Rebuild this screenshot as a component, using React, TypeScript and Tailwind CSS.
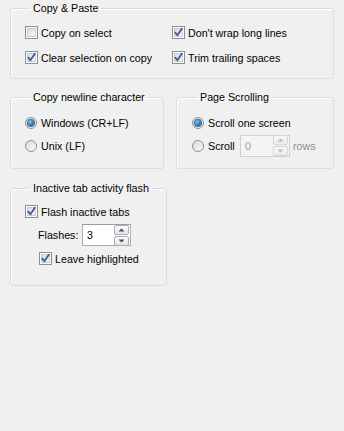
import React from "react";

const font = { fontFamily: '"Liberation Sans", Arial, sans-serif' };

function CheckBox({ checked }: { checked: boolean }) {
  return (
    <span className="relative inline-block w-[13px] h-[13px] shrink-0 border border-[#8e8f8f] bg-white">
      <span className="absolute left-[1px] top-[1px] w-[9px] h-[9px] border border-[#c7cbd1] bg-gradient-to-br from-[#d8dbe0] to-[#f9f9f9]" />
      {checked && (
        <svg className="absolute left-0 top-0" width="11" height="11" viewBox="0 0 11 11">
          <path d="M2.3 5.6 L4.4 8.3 L8.8 1.8" fill="none" stroke="#3b5a9a" strokeWidth="1.8" strokeLinecap="round" strokeLinejoin="round" />
        </svg>
      )}
    </span>
  );
}

function Radio({ checked }: { checked: boolean }) {
  return (
    <span className="relative inline-flex items-center justify-center w-[12px] h-[12px] shrink-0 rounded-full border border-[#8e8f8f] bg-gradient-to-br from-[#d6d9de] to-[#fbfbfb]">
      {checked && (
        <span className="w-[6px] h-[6px] rounded-full bg-[radial-gradient(circle_at_35%_35%,#8fd0f5_0%,#2a86c4_45%,#124d7e_100%)] shadow-[0_0_0_1px_#3d6a8f]" />
      )}
    </span>
  );
}

function SpinButtons({ disabled }: { disabled?: boolean }) {
  const arrow = disabled ? "#b9b9b9" : "#4d4d4d";
  const btn =
    "flex items-center justify-center w-[15px] h-[10px] rounded-[2px] border " +
    (disabled
      ? "border-[#d6d6d6] bg-gradient-to-b from-[#f7f7f7] to-[#ececec]"
      : "border-[#a9acb2] bg-gradient-to-b from-[#fbfbfb] to-[#e3e6ea]");
  return (
    <span className="flex flex-col gap-[1px]">
      <span className={btn}>
        <svg width="7" height="4" viewBox="0 0 7 4">
          <path d="M0.5 3.5 L3.5 0.5 L6.5 3.5 Z" fill={arrow} />
        </svg>
      </span>
      <span className={btn}>
        <svg width="7" height="4" viewBox="0 0 7 4">
          <path d="M0.5 0.5 L3.5 3.5 L6.5 0.5 Z" fill={arrow} />
        </svg>
      </span>
    </span>
  );
}

function Group({
  title,
  className,
  children,
}: {
  title: string;
  className: string;
  children: React.ReactNode;
}) {
  return (
    <fieldset
      className={
        "m-0 min-w-0 border border-[#d5dfe5] rounded-[3px] shadow-[inset_1px_1px_0_#ffffff] " +
        className
      }
    >
      <legend className="ml-[5px] px-[3px] leading-[14px] text-[10.7px] text-black whitespace-nowrap">{title}</legend>
      {children}
    </fieldset>
  );
}

export default function App() {
  return (
    <div
      className="w-[344px] h-[431px] bg-[#f0f0f0] px-[10px] pt-[1px] text-[10.7px] text-black leading-[14px] overflow-hidden"
      style={font}
    >
      <Group title="Copy & Paste" className="pt-[5px] pb-[8px] pl-[14px]">
        <div className="grid grid-cols-[147px_1fr]">
          <label className="flex items-center gap-[3px] h-[25px] whitespace-nowrap">
            <CheckBox checked={false} />
            <span>Copy on select</span>
          </label>
          <label className="flex items-center gap-[3px] h-[25px] whitespace-nowrap">
            <CheckBox checked />
            <span>Don't wrap long lines</span>
          </label>
          <label className="flex items-center gap-[3px] h-[25px] whitespace-nowrap">
            <CheckBox checked />
            <span>Clear selection on copy</span>
          </label>
          <label className="flex items-center gap-[3px] h-[25px] whitespace-nowrap">
            <CheckBox checked />
            <span>Trim trailing spaces</span>
          </label>
        </div>
      </Group>

      <div className="flex mt-[11px]">
        <Group title="Copy newline character" className="w-[154px] pt-[7px] pb-[11px] pl-[14px]">
          <label className="flex items-center gap-[4px] h-[23px] whitespace-nowrap">
            <Radio checked />
            <span>Windows (CR+LF)</span>
          </label>
          <label className="flex items-center gap-[4px] h-[23px] whitespace-nowrap">
            <Radio checked={false} />
            <span>Unix (LF)</span>
          </label>
        </Group>
        <Group title="Page Scrolling" className="ml-[12px] w-[158px] pt-[7px] pb-[11px] pl-[15px]">
          <label className="flex items-center gap-[4px] h-[23px] whitespace-nowrap">
            <Radio checked />
            <span>Scroll one screen</span>
          </label>
          <div className="flex items-center h-[23px] whitespace-nowrap">
            <Radio checked={false} />
            <span className="ml-[4px] w-[32px]">Scroll</span>
            <span className="flex items-center justify-between w-[50px] h-[22px] border border-[#d0d0d0] bg-[#f4f4f4] pl-[4px] pr-[1px]">
              <span className="text-[#a3a3a3]">0</span>
              <SpinButtons disabled />
            </span>
            <span className="ml-[3px] text-[#8f8f8f]">rows</span>
          </div>
        </Group>
      </div>

      <Group title="Inactive tab activity flash" className="mt-[12px] w-[157px] pt-[5px] pb-[15px] pl-[14px]">
        <label className="flex items-center gap-[3px] h-[23px] whitespace-nowrap">
          <CheckBox checked />
          <span>Flash inactive tabs</span>
        </label>
        <div className="flex items-center h-[24px] pl-[13px] whitespace-nowrap">
          <span className="w-[44px]">Flashes:</span>
          <span className="flex items-center justify-between w-[49px] h-[22px] border border-[#abadb3] border-t-[#9a9da3] bg-white pl-[4px] pr-[1px]">
            <span>3</span>
            <SpinButtons />
          </span>
        </div>
        <label className="flex items-center gap-[3px] h-[23px] pl-[14px] whitespace-nowrap">
          <CheckBox checked />
          <span>Leave highlighted</span>
        </label>
      </Group>
    </div>
  );
}
